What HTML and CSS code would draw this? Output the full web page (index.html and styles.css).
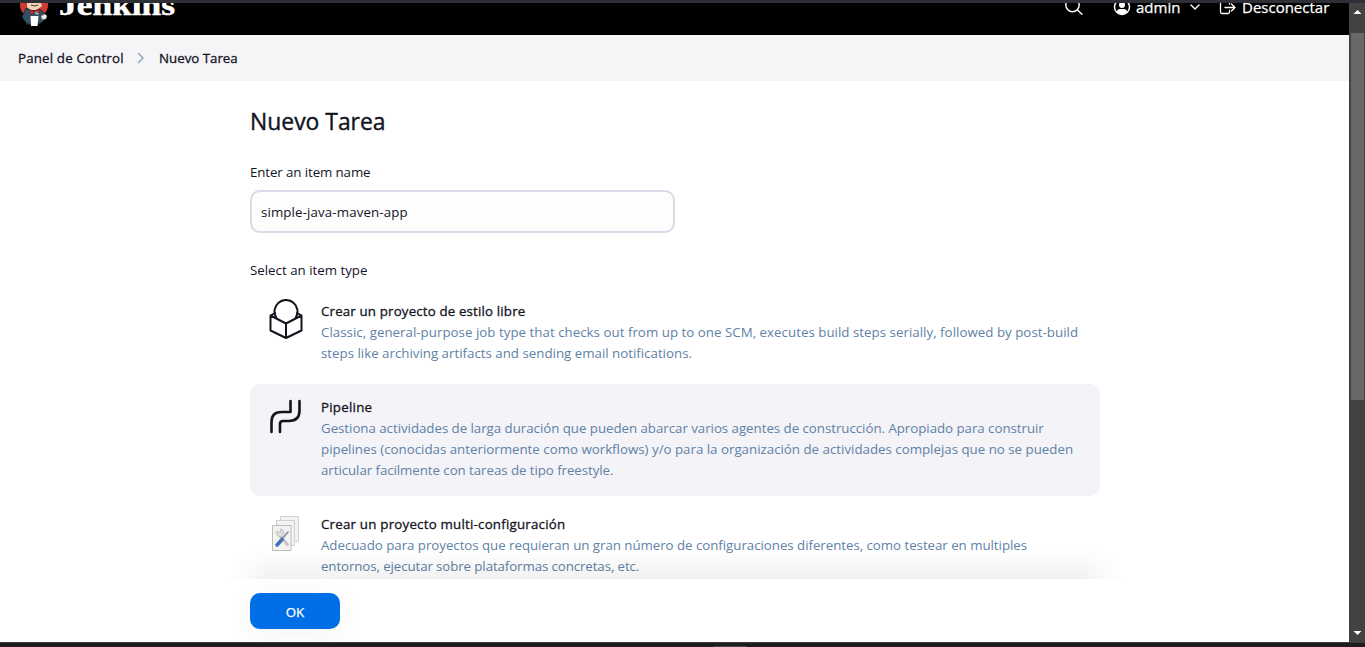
FILE: index.html
```html
<!DOCTYPE html>
<html lang="es">
<head>
<meta charset="utf-8">
<title>Nuevo Tarea [Jenkins]</title>
<link rel="stylesheet" href="styles.css">
</head>
<body>
<div class="frame-top"></div>
<div class="viewport">
  <div class="page">
    <header class="header">
      <svg class="mascot" width="32" height="26" viewBox="0 0 32 26">
        <ellipse cx="15" cy="2" rx="14" ry="13" fill="#d33833"/>
        <path d="M8 0h14l1 3-5 4H11L8 4z" fill="#edd4b9"/>
        <path d="M3 14L7 5l4 2 4 1 6-2 4 4 1 6-4 4-5 2-9-1-3-4z" fill="#335061" stroke="#152129" stroke-width=".8"/>
        <path d="M11 7l4 1.500L20 6v5l-4-1.500-4 2z" fill="#d33833" stroke="#5c1b1b" stroke-width=".6"/>
        <path d="M16 9l4 1-1 2-3-1z" fill="#81b0c4"/>
        <path d="M12 2q4 2 7 0" fill="none" stroke="#50372b"/>
        <path d="M22 13l4-2 2 2-1 3-4 .5z" fill="#eee" stroke="#777" stroke-width=".5"/>
        <path d="M11.500 13h8l-1 10h-6.500z" fill="#fff"/>
      </svg>
      <svg class="wordmark" width="120" height="26" viewBox="0 0 120 26"><text x="1" y="12" textLength="116" lengthAdjust="spacingAndGlyphs">Jenkins</text></svg>
      <nav class="tools">
        <svg class="search" width="20" height="20" viewBox="0 0 20 20" fill="none" stroke="#fff" stroke-width="1.4" stroke-linecap="round"><circle cx="8.500" cy="8" r="6.700"/><path d="M13.400 12.900L18 17.300"/></svg>
        <a class="user">
          <svg width="18" height="18" viewBox="0 0 18 18"><circle cx="9" cy="9" r="7.500" fill="none" stroke="#fff" stroke-width="1.500"/><circle cx="9" cy="7" r="3" fill="#fff"/><path d="M4 14q0-3 3-3h4q3 0 3 3-5 4.500-10 0z" fill="#fff"/></svg>
          <span class="admin">admin</span>
          <svg class="chevron" width="10" height="7" viewBox="0 0 10 7" fill="none" stroke="#fff" stroke-width="1.400" stroke-linecap="round" stroke-linejoin="round"><path d="M1 1l4 4 4-4"/></svg>
        </a>
        <a class="logout">
          <svg width="18" height="16" viewBox="0 0 18 16" fill="none" stroke="#fff" stroke-width="1.300" stroke-linecap="round" stroke-linejoin="round"><path d="M10.500 4V2.500q0-1.500-1.500-1.500H3Q1.500 1 1.500 2.500V12q0 1.500 1.500 1.500h6q1.500 0 1.500-1.500v-1.500M6 7.500h10M12.500 4l3.500 3.500-3.500 3.500"/></svg>
          <span class="logout-label">Desconectar</span>
        </a>
      </nav>
    </header>
    <nav class="breadcrumbs">
      <span class="crumb crumb-home">Panel de Control</span>
      <svg width="8" height="12" viewBox="0 0 8 12" fill="none" stroke="#8fa6c0" stroke-width="1.500" stroke-linecap="round" stroke-linejoin="round"><path d="M1.500 1.500L6 6l-4.500 4.500"/></svg>
      <span class="crumb crumb-current">Nuevo Tarea</span>
    </nav>
    <main class="content">
      <h1 class="title">Nuevo Tarea</h1>
      <label class="label name-label">Enter an item name</label>
      <div class="input"><span class="value">simple-java-maven-app</span></div>
      <div class="label type-label">Select an item type</div>
      <ul class="items">
        <li class="item">
          <svg class="icon" width="36" height="42" viewBox="0 0 36 42" fill="none" stroke="#14141f" stroke-width="2" stroke-linejoin="round" stroke-linecap="round"><path d="M7 14L2.500 16.500v15L18 39l15.500-7.500v-15L29 14M2.500 16.500L18 24.500 33.500 16.500M18 24.500V39"/><path d="M8.200 18.500A11.500 11.500 0 1 1 27.800 18.500"/></svg>
          <div class="text">
            <div class="name n1">Crear un proyecto de estilo libre</div>
            <div class="desc"><span class="line a1">Classic, general-purpose job type that checks out from up to one SCM, executes build steps serially, followed by post-build</span><span class="line">steps like archiving artifacts and sending email notifications.</span></div>
          </div>
        </li>
        <li class="item selected">
          <svg class="icon" width="36" height="42" viewBox="0 0 36 42" fill="none" stroke="#14141f" stroke-width="2.600" stroke-linejoin="round" stroke-linecap="round"><path d="M3.500 37V27Q3.500 17 13.500 17H22.500V6M12 37V29q0-3 3-3H21Q31.500 26 31.500 15.500V6"/></svg>
          <div class="text">
            <div class="name n2">Pipeline</div>
            <div class="desc"><span class="line b1">Gestiona actividades de larga duración que pueden abarcar varios agentes de construcción. Apropiado para construir</span><span class="line">pipelines (conocidas anteriormente como workflows) y/o para la organización de actividades complejas que no se pueden</span><span class="line b3">articular facilmente con tareas de tipo freestyle.</span></div>
          </div>
        </li>
        <li class="item">
          <svg class="icon" width="36" height="42" viewBox="0 0 36 42"><g fill="#f3f3f2" stroke="#d0d0ce"><path d="M12.500 4.500h18v25h-18z"/><path d="M8.500 8.500h18v25h-18z"/><path d="M4.500 13.500h18.500v25h-18.500z" stroke="#bcbcba"/></g><path d="M19.500 32.500l-7-8" stroke="#c3c5c2" stroke-width="3" stroke-linecap="round"/><path d="M8 20l1-1 3 2 1-2-1-2q4 0 4 4l-3 4q-4 0-5-5z" fill="#dfe0de" stroke="#aaa" stroke-width=".6"/><path d="M14 27l6-7" stroke="#7c8da4" stroke-width="1.600" stroke-linecap="round"/><path d="M9 33l5-5.500" stroke="#3f73ba" stroke-width="3.600" stroke-linecap="round"/></svg>
          <div class="text">
            <div class="name n3">Crear un proyecto multi-configuración</div>
            <div class="desc"><span class="line c1">Adecuado para proyectos que requieran un gran número de configuraciones diferentes, como testear en multiples</span><span class="line c2">entornos, ejecutar sobre plataformas concretas, etc.</span></div>
          </div>
        </li>
      </ul>
      <div class="fade"></div>
    </main>
    <footer class="footer"><button class="ok">OK</button></footer>
  </div>
  <div class="scrollbar">
    <svg width="16" height="30" viewBox="0 0 16 30"><path d="M4.500 11L8.500 7l4 4z" fill="#fff"/></svg>
    <div class="thumb"></div>
    <svg class="down" width="16" height="16" viewBox="0 0 16 16"><path d="M4.500 5h8l-4 4z" fill="#fff"/></svg>
  </div>
</div>
<div class="frame-bottom"><div class="notch"></div></div>
</body>
</html>
```

FILE: styles.css
```css
* { box-sizing: border-box; }
body {
  margin: 0; width: 1365px; height: 647px; overflow: hidden;
  display: flex; flex-direction: column;
  font-family: "Open Sans", "Noto Sans", sans-serif;
  font-size: 13.300px; line-height: 21px; color: #14141f; background: #fff;
}
.frame-top { height: 3px; background: #2f2f36; flex: none; }
.viewport { height: 639px; display: flex; flex: none; }
.page { width: 1349px; height: 639px; overflow: hidden; display: flex; flex-direction: column; }
.header { height: 32px; background: #000; color: #fff; display: flex; flex: none; align-items: flex-start; padding-left: 19px; overflow: hidden; }
.mascot { margin-right: 7px; }
.wordmark text { font: bold 29px "Liberation Serif", serif; fill: #fff; stroke: #fff; stroke-width: .5px; }
.tools { margin-left: auto; width: 285px; display: flex; font-size: 15px; line-height: 20px; margin-top: -6px; -webkit-text-stroke: .25px #fff; }
.search { flex: none; }
.user { display: flex; margin-left: 29px; width: 106px; flex: none; }
.user svg:first-child { margin-top: 1px; }
.admin { margin-left: 5px; width: 46px; white-space: nowrap; }
.chevron { margin: 7px 0 0 8px; }
.logout { display: flex; white-space: nowrap; }
.logout > svg { margin-top: 3px; }
.logout-label { margin-left: 5px; }
.breadcrumbs { height: 46px; background: #f5f5f8; flex: none; display: flex; align-items: center; padding-left: 18px; }
.crumb, .name { white-space: nowrap; -webkit-text-stroke: .3px #14141f; }
.crumb-home { width: 119px; letter-spacing: .17px; }
.crumb-current { margin-left: 14px; }
.content { width: 850px; margin-left: 250px; flex: 1; min-height: 0; position: relative; }
.title { margin: 23px 0 0; font-size: 22.900px; line-height: 36px; font-weight: 400; white-space: nowrap; -webkit-text-stroke: .4px #14141f; }
.label { white-space: nowrap; }
.name-label { display: block; margin-top: 22px; letter-spacing: -.1px; }
.input { margin-top: 7px; width: 425px; height: 43px; border: 2px solid #d8dbe8; border-radius: 10px; background: #fdfdfd; padding: 10px 9px; }
.value { letter-spacing: .12px; }
.type-label { margin-top: 27px; }
.items { list-style: none; margin: 7px 0 0; padding: 0; }
.item { display: flex; height: 91px; padding: 12px 18px; margin-bottom: 5px; border-radius: 10px; }
.item.selected { height: 112px; background: #f3f3f8; }
.icon { margin-top: -1px; margin-right: 17px; flex: none; }
.name { margin-top: 1px; }
.n1 { letter-spacing: .16px; }
.n2 { letter-spacing: .25px; }
.n3 { letter-spacing: .22px; }
.desc { color: #6182a6; }
.line { display: block; white-space: nowrap; }
.a1 { letter-spacing: .025px; }
.b1 { letter-spacing: -.035px; }
.b3 { letter-spacing: -.06px; }
.c1 { letter-spacing: -.037px; }
.c2 { letter-spacing: -.1px; }
.fade {
  position: absolute; left: -20px; right: -22px; bottom: 0; height: 30px; pointer-events: none;
  background: linear-gradient(to top, rgba(0, 0, 0, .055), transparent);
  -webkit-mask-image: linear-gradient(to right, transparent, #000 40px, #000 calc(100% - 40px), transparent);
  mask-image: linear-gradient(to right, transparent, #000 40px, #000 calc(100% - 40px), transparent);
}
.footer { position: relative; height: 63px; flex: none; padding: 14px 0 0 250px; background: #fff; overflow: hidden; }
.ok { display: block; width: 90px; height: 36px; border: 0; border-radius: 10px; background: #006fe6; color: #fff; font: 13.300px "Open Sans", sans-serif; padding: 1px 0 0; -webkit-text-stroke: .25px #fff; box-shadow: 0 6px 30px rgba(0, 0, 0, .05); }
.scrollbar { width: 16px; height: 639px; background: #424242; display: flex; flex-direction: column; }
.scrollbar svg { display: block; flex: none; }
.thumb { height: 367px; width: 13px; margin-left: 2px; background: #686868; }
.down { margin-top: auto; }
.frame-bottom { height: 5px; background: #1e1c1d; border-top: 1px solid #3c3c3d; }
.notch { width: 34px; height: 1px; margin: 3px 0 0 713px; background: #444; }
```
